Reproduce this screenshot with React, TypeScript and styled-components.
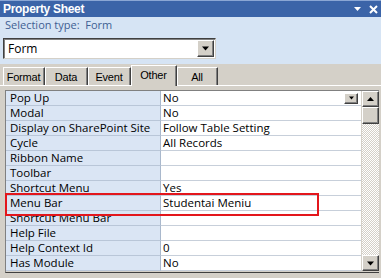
import React from "react";
import styled, { createGlobalStyle } from "styled-components";

const Global = createGlobalStyle`
  html, body { margin: 0; padding: 0; }
  body { width: 381px; height: 278px; overflow: hidden; background: #d4d0c8; }
`;

const FONT = `"Open Sans", "Liberation Sans", Arial, sans-serif`;

const Window = styled.div`
  position: relative;
  width: 381px;
  height: 278px;
  display: flex;
  flex-direction: column;
  background: #d4d0c8;
  font-family: ${FONT};
  font-size: 11px;
  color: #000;
  overflow: hidden;
`;

const TitleBar = styled.div`
  height: 16px;
  border-top: 1px solid #8aa6d4;
  background: #3b64a8;
  display: flex;
  align-items: center;
  justify-content: space-between;
  padding: 0 3px 0 3px;
`;

const Title = styled.span`
  color: #fff;
  font-weight: bold;
  font-size: 12px;
  font-family: "Liberation Sans", Arial, sans-serif;
  line-height: 16px;
  letter-spacing: -0.3px;
`;

const TitleIcons = styled.div`
  display: flex;
  align-items: center;
  gap: 8px;
`;

const SelectionPanel = styled.div`
  height: 47px;
  background: #d6e4f4;
  padding: 0 0 0 3px;
  box-sizing: border-box;
  display: flex;
  flex-direction: column;
`;

const SelectionLabel = styled.div`
  height: 16px;
  line-height: 16px;
  padding-left: 2px;
  color: #3f5f93;
  font-size: 11px;
  white-space: pre;
`;

const Combo = styled.div`
  margin-top: 5px;
  width: 213px;
  height: 21px;
  box-sizing: border-box;
  background: #fff;
  border-top: 1px solid #404040;
  border-left: 1px solid #404040;
  border-right: 1px solid #d4d0c8;
  border-bottom: 1px solid #d4d0c8;
  box-shadow: inset 1px 1px 0 #808080;
  display: flex;
  align-items: center;
  justify-content: space-between;
  padding: 0 1px 0 4px;
  font-size: 12px;
  line-height: 16px;
`;

const ArrowButton = styled.div<{ $w: number; $h: number }>`
  width: ${(p) => p.$w}px;
  height: ${(p) => p.$h}px;
  box-sizing: border-box;
  background: #d4d0c8;
  border-top: 1px solid #fff;
  border-left: 1px solid #fff;
  border-right: 1px solid #404040;
  border-bottom: 1px solid #404040;
  box-shadow: inset -1px -1px 0 #808080;
  display: flex;
  align-items: center;
  justify-content: center;
  flex-shrink: 0;
`;

const TabStrip = styled.div`
  height: 22px;
  box-sizing: border-box;
  border-bottom: 1px solid #fff;
  padding-left: 3px;
  display: flex;
  align-items: flex-end;
`;

const Tab = styled.div<{ $w: number; $active?: boolean }>`
  width: ${(p) => p.$w}px;
  height: ${(p) => (p.$active ? 21 : 18)}px;
  margin-bottom: ${(p) => (p.$active ? -1 : 0)}px;
  box-sizing: border-box;
  border-top: 1px solid #fff;
  border-left: 1px solid #fff;
  border-right: 1px solid #404040;
  box-shadow: inset -1px 0 0 #808080;
  background: #d4d0c8;
  display: flex;
  align-items: center;
  justify-content: center;
  font-family: "Liberation Sans", Arial, sans-serif;
  font-size: 11px;
  letter-spacing: -0.2px;
  line-height: 14px;
  padding: 0 1px ${(p) => (p.$active ? 3 : 0)}px 0;
  position: relative;
  z-index: ${(p) => (p.$active ? 1 : 0)};
`;

const GridArea = styled.div`
  display: flex;
  padding: 4px 2px 0 5px;
  flex: 1;
  min-height: 0;
`;

const GridFrame = styled.div`
  display: flex;
  border-top: 1px solid #808080;
  border-left: 1px solid #808080;
  border-bottom: 1px solid #404040;
  height: 181px;
`;

const Rows = styled.div`
  width: 355px;
  display: flex;
  flex-direction: column;
  margin-right: 1px;
`;

const Row = styled.div`
  display: grid;
  grid-template-columns: 155px 200px;
  height: 15px;
`;

const LabelCell = styled.div`
  background: #dae5f4;
  border-right: 1px solid #a9b8cc;
  border-bottom: 1px solid #b9c6d8;
  padding-left: 4px;
  height: 14px;
  line-height: 14px;
  font-size: 11.5px;
  white-space: nowrap;
  overflow: hidden;
`;

const ValueCell = styled.div`
  background: #fff;
  border-bottom: 1px solid #c7cfda;
  padding-left: 2px;
  padding-right: 3px;
  height: 14px;
  line-height: 14px;
  font-size: 11.5px;
  display: flex;
  align-items: center;
  justify-content: space-between;
  white-space: nowrap;
  overflow: hidden;
`;

const ScrollBar = styled.div`
  width: 17px;
  height: 180px;
  display: flex;
  flex-direction: column;
`;

const Track = styled.div`
  flex: 1;
  background-color: #fff;
  background-image: conic-gradient(#d4d0c8 25%, #fff 0 50%, #d4d0c8 0 75%, #fff 0);
  background-size: 2px 2px;
`;

const Thumb = styled(ArrowButton)``;

const Highlight = styled.div`
  position: absolute;
  left: 5px;
  top: 193px;
  width: 314px;
  height: 23px;
  box-sizing: border-box;
  border: 2px solid #e3161c;
  pointer-events: none;
`;

const Down = ({ size = 7 }: { size?: number }) => (
  <svg width={size} height={Math.ceil(size / 2) + 1} viewBox="0 0 7 4">
    <path d="M0 0h7L3.5 4z" fill="#000" />
  </svg>
);

const Up = () => (
  <svg width="7" height="4" viewBox="0 0 7 4">
    <path d="M0 4h7L3.5 0z" fill="#000" />
  </svg>
);

const rows: [string, string][] = [
  ["Pop Up", "No"],
  ["Modal", "No"],
  ["Display on SharePoint Site", "Follow Table Setting"],
  ["Cycle", "All Records"],
  ["Ribbon Name", ""],
  ["Toolbar", ""],
  ["Shortcut Menu", "Yes"],
  ["Menu Bar", "Studentai Meniu"],
  ["Shortcut Menu Bar", ""],
  ["Help File", ""],
  ["Help Context Id", "0"],
  ["Has Module", "No"],
];

const tabs: { name: string; w: number; active?: boolean }[] = [
  { name: "Format", w: 42 },
  { name: "Data", w: 43 },
  { name: "Event", w: 43 },
  { name: "Other", w: 46, active: true },
  { name: "All", w: 41 },
];

export default function App() {
  return (
    <Window>
      <Global />
      <TitleBar>
        <Title>Property Sheet</Title>
        <TitleIcons>
          <svg width="7" height="4" viewBox="0 0 7 4">
            <path d="M0 0h7L3.5 4z" fill="#fff" />
          </svg>
          <svg width="9" height="9" viewBox="0 0 9 9">
            <path d="M1 1l7 7M8 1L1 8" stroke="#fff" strokeWidth="2" />
          </svg>
        </TitleIcons>
      </TitleBar>
      <SelectionPanel>
        <SelectionLabel>Selection type:  Form</SelectionLabel>
        <Combo>
          <span>Form</span>
          <ArrowButton $w={17} $h={17}>
            <Down />
          </ArrowButton>
        </Combo>
      </SelectionPanel>
      <TabStrip>
        {tabs.map((t) => (
          <Tab key={t.name} $w={t.w} $active={t.active}>
            {t.name}
          </Tab>
        ))}
      </TabStrip>
      <GridArea>
        <GridFrame>
          <Rows>
            {rows.map(([k, v], i) => (
              <Row key={k}>
                <LabelCell>{k}</LabelCell>
                <ValueCell>
                  <span>{v}</span>
                  {i === 0 && (
                    <ArrowButton $w={14} $h={11}>
                      <Down size={5} />
                    </ArrowButton>
                  )}
                </ValueCell>
              </Row>
            ))}
          </Rows>
          <ScrollBar>
            <ArrowButton $w={17} $h={16}>
              <Up />
            </ArrowButton>
            <Thumb $w={17} $h={17} />
            <Track />
            <ArrowButton $w={17} $h={16}>
              <Down />
            </ArrowButton>
          </ScrollBar>
        </GridFrame>
      </GridArea>
      <Highlight />
    </Window>
  );
}
